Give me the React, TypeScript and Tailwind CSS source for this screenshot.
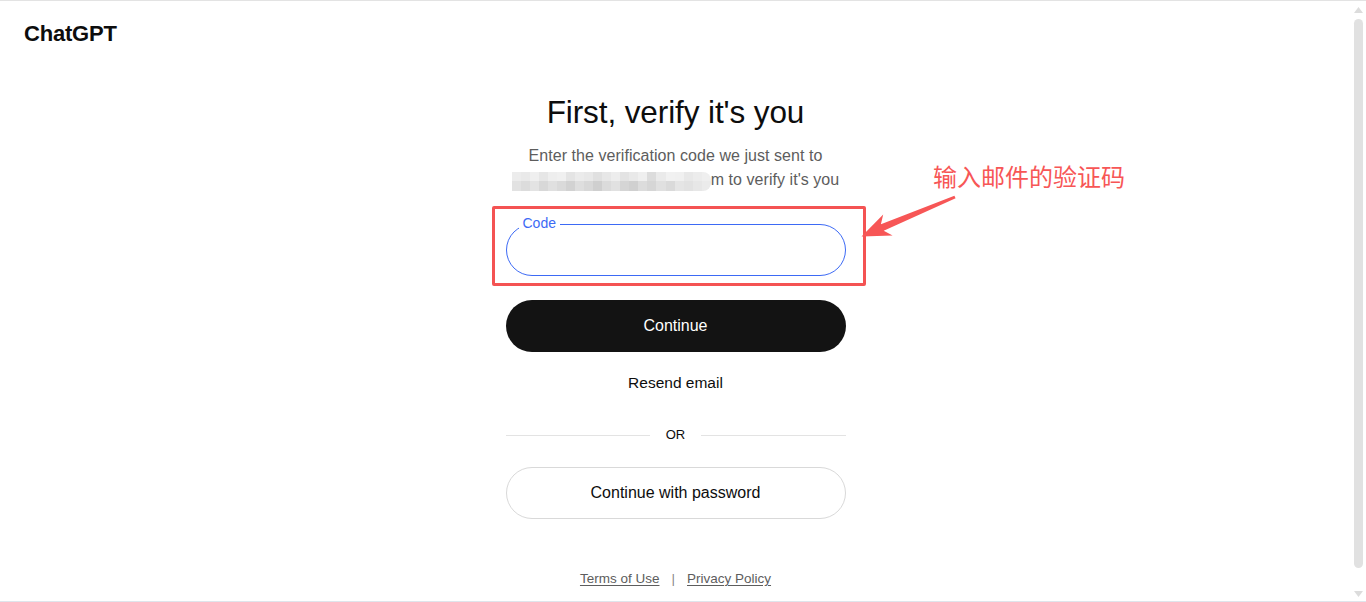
import React from "react";

const row1 = ["#ececec","#e9e9e9","#efefef","#e6e6e6","#eeeeee","#f0f0f0","#e4e4e4","#ebebeb","#e8e8e8","#e0e0e0","#e7e7e7","#ededed","#e3e3e3","#e9e9e9","#efefef","#dcdcdc","#eaeaea","#f1f1f1","#f0f0f0","#e8e8e8","#ececec","#efefef"];
const row2 = ["#e2e2e2","#dcdcdc","#e3e3e3","#d8d8d8","#e0e0e0","#dadada","#d2d2d2","#dedede","#d8d8d8","#cfcfcf","#dbdbdb","#e1e1e1","#d5d5d5","#d0d0d0","#dcdcdc","#d6d6d6","#e0e0e0","#dadada","#e5e5e5","#e2e2e2","#e7e7e7","#ebebeb"];

function Mosaic() {
  return (
    <span className="flex flex-col w-[199px] h-[19px] overflow-hidden rounded-r-[8px] mt-[2px]">
      <span className="flex h-[9px]">
        {row1.map((c, i) => (
          <span key={i} className="flex-1 h-full" style={{ background: c }} />
        ))}
      </span>
      <span className="flex h-[10px]">
        {row2.map((c, i) => (
          <span key={i} className="flex-1 h-full" style={{ background: c }} />
        ))}
      </span>
    </span>
  );
}

export default function App() {
  return (
    <div className="h-[602px] w-full flex flex-col bg-white overflow-hidden font-['Liberation_Sans',Arial,sans-serif] text-[#0d0d0d]">
      <div className="h-px bg-[#e3e3e3] shrink-0" />
      <div className="flex flex-1 min-h-0">
        <div className="flex-1 relative flex flex-col">
          <div className="pl-6 pt-[19px]">
            <div className="text-[22px] leading-[28px] font-bold tracking-[-0.2px]">ChatGPT</div>
          </div>

          <div className="flex flex-col items-center">
            <h1 className="mt-[44px] text-[31.5px] leading-[40px] font-normal tracking-[-0.1px]">First, verify it's you</h1>
            <div className="mt-[12px] text-[16px] leading-[24px] text-[#5d5d5d] text-center flex flex-col items-center tracking-[0.05px]">
              <div className="h-[24px]">Enter the verification code we just sent to</div>
              <div className="h-[24px] flex items-center">
                <Mosaic />
                <span>m to verify it's you</span>
              </div>
            </div>

            <div className="relative mt-8 w-[340px]">
              <div className="h-[52px] rounded-full border border-[#3d6af5]" />
              <span className="absolute left-[13px] -top-[10px] bg-white px-[4px] text-[14px] leading-[19px] text-[#3d6af5]">
                Code
              </span>
              <div className="absolute -left-[14px] -top-[18px] -right-[20px] -bottom-[10px] border-[3px] border-[#f45353] rounded-[2px] pointer-events-none" />
            </div>

            <button className="mt-6 w-[340px] h-[52px] rounded-full bg-[#131313] text-white text-[16px] font-medium">
              Continue
            </button>

            <div className="mt-[19px] text-[15.5px] leading-[24px]">Resend email</div>

            <div className="mt-[30px] w-[340px] flex items-center gap-4">
              <div className="flex-1 h-px bg-[#e3e3e3]" />
              <span className="text-[13px] leading-[20px] font-medium">OR</span>
              <div className="flex-1 h-px bg-[#e3e3e3]" />
            </div>

            <button className="mt-[22px] w-[340px] h-[52px] rounded-full border border-[#d9d9d9] bg-white text-[16px]">
              Continue with password
            </button>

            <div className="mt-[50px] flex items-center gap-3 text-[13.5px] leading-[20px] text-[#5d5d5d]">
              <a className="underline underline-offset-2">Terms of Use</a>
              <span className="text-[#8a8a8a]">|</span>
              <a className="underline underline-offset-2">Privacy Policy</a>
            </div>
          </div>

          <div className="absolute left-[933px] top-[159px] text-[24px] leading-[32px] text-[#f75656] font-['Noto_Sans_CJK_SC',sans-serif] whitespace-nowrap">
            输入邮件的验证码
          </div>
          <svg
            className="absolute left-[855px] top-[187px] pointer-events-none"
            width="105"
            height="55"
            viewBox="855 188 105 55"
          >
            <polygon
              fill="#f75656"
              points="954.4,195.8 880.9,224.3 883.2,214.6 861.5,236.5 892.6,235.5 883.7,230.7 955.6,198.2"
            />
          </svg>
        </div>

        <div className="w-[15px] shrink-0 flex flex-col items-center bg-white">
          <svg width="9" height="6" className="mt-[6px]" viewBox="0 0 9 6">
            <polygon points="4.5,0 9,6 0,6" fill="#dcdcdc" />
          </svg>
          <div className="mt-[6px] w-[9px] h-[549px] rounded-full bg-[#e1e1e1]" />
          <div className="flex-1" />
          <svg width="9" height="6" className="mb-[4px]" viewBox="0 0 9 6">
            <polygon points="0,0 9,0 4.5,6" fill="#dcdcdc" />
          </svg>
        </div>
      </div>
      <div className="h-px bg-[#dfe5ec] shrink-0" />
    </div>
  );
}
